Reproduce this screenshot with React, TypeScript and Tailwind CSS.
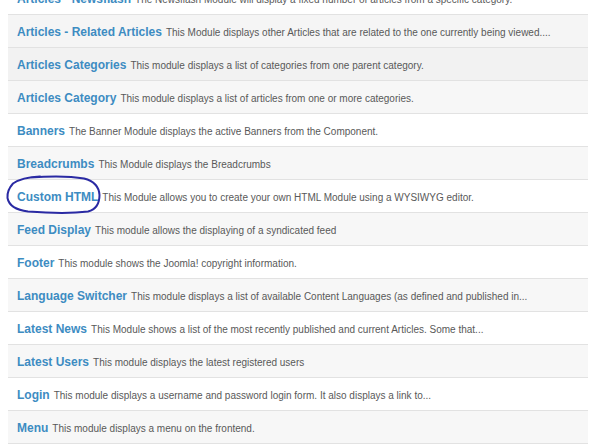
const modules = [
  {
    title: "Articles - Newsflash",
    desc: "The Newsflash Module will display a fixed number of articles from a specific category.",
    bg: "bg-white",
  },
  {
    title: "Articles - Related Articles",
    desc: "This Module displays other Articles that are related to the one currently being viewed....",
    bg: "bg-[#f5f5f5]",
  },
  {
    title: "Articles Categories",
    desc: "This module displays a list of categories from one parent category.",
    bg: "bg-[#f2f2f2]",
  },
  {
    title: "Articles Category",
    desc: "This module displays a list of articles from one or more categories.",
    bg: "bg-[#f7f7f7]",
  },
  {
    title: "Banners",
    desc: "The Banner Module displays the active Banners from the Component.",
    bg: "bg-white",
  },
  {
    title: "Breadcrumbs",
    desc: "This Module displays the Breadcrumbs",
    bg: "bg-[#f7f7f7]",
  },
  {
    title: "Custom HTML",
    desc: "This Module allows you to create your own HTML Module using a WYSIWYG editor.",
    bg: "bg-white",
  },
  {
    title: "Feed Display",
    desc: "This module allows the displaying of a syndicated feed",
    bg: "bg-[#f7f7f7]",
  },
  {
    title: "Footer",
    desc: "This module shows the Joomla! copyright information.",
    bg: "bg-white",
  },
  {
    title: "Language Switcher",
    desc: "This module displays a list of available Content Languages (as defined and published in...",
    bg: "bg-[#f7f7f7]",
  },
  {
    title: "Latest News",
    desc: "This Module shows a list of the most recently published and current Articles. Some that...",
    bg: "bg-white",
  },
  {
    title: "Latest Users",
    desc: "This module displays the latest registered users",
    bg: "bg-[#f7f7f7]",
  },
  {
    title: "Login",
    desc: "This module displays a username and password login form. It also displays a link to...",
    bg: "bg-white",
  },
  {
    title: "Menu",
    desc: "This module displays a menu on the frontend.",
    bg: "bg-[#f7f7f7]",
  },
];

export default function App() {
  return (
    <div className="relative w-[600px] h-[444px] overflow-hidden bg-white font-['Liberation_Sans',Arial,sans-serif]">
      <ul className="ml-2 w-[580px] -mt-[18px]">
        {modules.map((m) => (
          <li
            key={m.title}
            className={`h-[33px] flex items-center pl-[9px] pt-[2px] border-b border-[#e2e2e2] whitespace-nowrap ${m.bg}`}
          >
            <a href="#" className="text-[12px] font-bold text-[#3d8cc2]">
              {m.title}
            </a>
            <span className="ml-[4px] text-[10px] text-[#595959]">{m.desc}</span>
          </li>
        ))}
      </ul>

      {/* hand-drawn marker circle around Custom HTML */}
      <svg
        className="absolute top-0 left-0 pointer-events-none"
        width="600"
        height="444"
        viewBox="0 0 600 444"
      >
        <path
          d="M40 176.5 C28 177 18 180 13 183.5 C9 188 7 193 7.5 198 C9 206 16 210 28 211.5 C48 213 72 213.5 88 211.5 C96 209.5 99.5 203 99.5 195 C99 187 94 181 84 178.5 C70 176 50 176 30 177.5"
          fill="none"
          stroke="#2a2aa3"
          strokeWidth="2"
          strokeLinecap="round"
        />
      </svg>
    </div>
  );
}
